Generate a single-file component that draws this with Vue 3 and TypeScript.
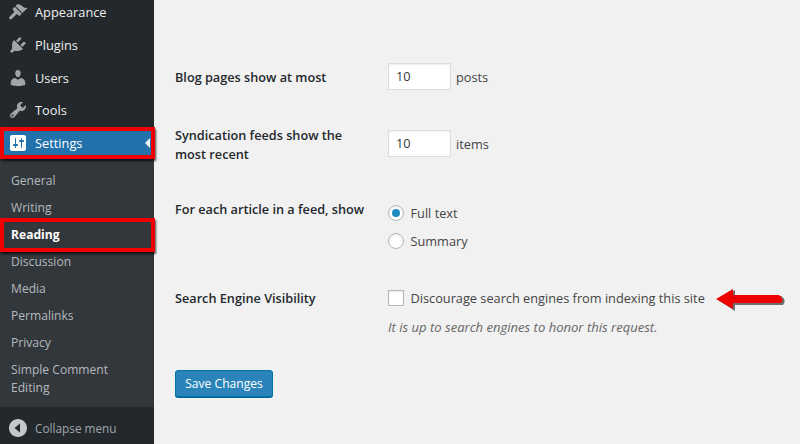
<script setup lang="ts">
const topItems = [
  { label: 'Appearance', d: 'M14.48 11.06L7.41 3.99l1.5-1.5c.5-.56 2.3-.47 3.51.32 1.21.8 1.43 1.28 2.91 2.1 1.18.64 2.45 1.26 4.45.85zm-.71.71L6.7 4.7 4.93 6.47c-.39.39-.39 1.02 0 1.41l1.06 1.06c.39.39.39 1.03 0 1.42l-4.4 4.4c-.6.6-.6 1.55 0 2.15s1.55.6 2.15 0l4.4-4.4c.39-.39 1.03-.39 1.42 0l1.06 1.06c.39.39 1.02.39 1.41 0z' },
  { label: 'Plugins', d: 'M13.11 4.36L9.87 7.6 8 5.73l3.24-3.24c.35-.34 1.05-.2 1.56.32.52.51.66 1.21.31 1.55zm-8 1.77l.91-1.12 9.01 9.01-1.19.84c-.71.71-2.63 1.16-3.82 1.16H6.14L4.9 17.26c-.59.59-1.54.59-2.12 0-.59-.58-.59-1.53 0-2.12l1.24-1.24v-3.88c0-1.13.4-3.19 1.09-3.89zm7.26 3.97l3.24-3.24c.34-.35 1.04-.21 1.55.31.52.51.66 1.21.31 1.55l-3.24 3.25z' },
  { label: 'Users', d: 'M10 9.25c-2.27 0-2.73-3.44-2.73-3.44C7 4.02 7.82 2 9.97 2c2.16 0 2.98 2.02 2.71 3.81 0 0-.41 3.44-2.68 3.44zm0 2.57L12.72 10c2.39 0 4.52 2.33 4.52 4.53v2.49s-3.65 1.13-7.24 1.13c-3.65 0-7.24-1.13-7.24-1.13v-2.49c0-2.25 1.94-4.48 4.47-4.48z' },
  { label: 'Tools', d: 'M16.68 9.77c-1.34 1.34-3.3 1.67-4.95.99l-5.41 6.52c-.99.99-2.59.99-3.58 0s-.99-2.59 0-3.57l6.52-5.42c-.68-1.65-.35-3.61.99-4.95 1.28-1.28 3.12-1.62 4.72-1.06l-2.89 2.89 2.82 2.82 2.86-2.87c.53 1.58.18 3.39-1.08 4.65zM3.81 16.21c.4.39 1.04.39 1.43 0 .4-.4.4-1.04 0-1.43-.39-.4-1.03-.4-1.43 0-.39.39-.39 1.03 0 1.43z' },
]
const settingsIcon = 'M18 16V4c0-1.1-.9-2-2-2H4c-1.1 0-2 .9-2 2v12c0 1.1.9 2 2 2h12c1.1 0 2-.9 2-2zM8 11h1c.55 0 1 .45 1 1s-.45 1-1 1H8v1.5c0 .28-.22.5-.5.5s-.5-.22-.5-.5V13H6c-.55 0-1-.45-1-1s.45-1 1-1h1V5.5c0-.28.22-.5.5-.5s.5.22.5.5V11zm5-2h-1c-.55 0-1-.45-1-1s.45-1 1-1h1V5.5c0-.28.22-.5.5-.5s.5.22.5.5V7h1c.55 0 1 .45 1 1s-.45 1-1 1h-1v5.5c0 .28-.22.5-.5.5s-.5-.22-.5-.5V9z'
const subItems = ['General', 'Writing', 'Reading', 'Discussion', 'Media', 'Permalinks', 'Privacy']
</script>

<template>
  <div class="page">
    <aside class="sidebar">
      <nav class="top">
        <div v-for="item in topItems" :key="item.label" class="menu-row">
          <svg class="icon" viewBox="0 0 20 20"><path :d="item.d" /></svg>
          <span>{{ item.label }}</span>
        </div>
        <div class="menu-row current">
          <svg class="icon" viewBox="0 0 20 20"><path :d="settingsIcon" /></svg>
          <span>Settings</span>
          <i class="notch"></i>
          <b class="red-box"></b>
        </div>
      </nav>
      <div class="submenu">
        <div v-for="s in subItems" :key="s" class="sub-row" :class="{ active: s === 'Reading' }">
          {{ s }}
          <b v-if="s === 'Reading'" class="red-box"></b>
        </div>
        <div class="sub-row multi">Simple Comment Editing</div>
      </div>
      <div class="collapse">
        <svg class="icon" viewBox="0 0 20 20"><path d="M10 19c-5 0-9-4-9-9s4-9 9-9 9 4 9 9-4 9-9 9zm2-13.500L6.500 10l5.500 4.500z" /></svg>
        <span>Collapse menu</span>
      </div>
    </aside>

    <main class="main">
      <div class="row r1">
        <div class="label">Blog pages show at most</div>
        <div class="field inline">
          <span class="input">10</span><span>posts</span>
        </div>
      </div>
      <div class="row r2">
        <div class="label two">Syndication feeds show the most recent</div>
        <div class="field inline">
          <span class="input">10</span><span>items</span>
        </div>
      </div>
      <div class="row r3">
        <div class="label">For each article in a feed, show</div>
        <div class="field">
          <div class="option"><i class="radio on"></i>Full text</div>
          <div class="option gap"><i class="radio"></i>Summary</div>
        </div>
      </div>
      <div class="row r4">
        <div class="label">Search Engine Visibility</div>
        <div class="field">
          <div class="option"><i class="check"></i>Discourage search engines from indexing this site</div>
          <div class="note">It is up to search engines to honor this request.</div>
        </div>
      </div>
      <button class="save" type="button">Save Changes</button>
      <svg class="arrow" viewBox="0 0 72 24" width="72" height="24">
        <path class="arrow-shadow" d="M2 12 L19 2 L19 8 L65 8 Q71 12 67 17 L19 17 L19 23 Z" />
        <path class="arrow-fill" d="M0 11 L17 1 L17 7 L63 7 Q69 11 65 15 L17 15 L17 21 Z" />
      </svg>
    </main>
  </div>
</template>

<style>
html, body { margin: 0; padding: 0; background: #f1f1f1; }
</style>

<style scoped>
.page {
  width: 800px;
  height: 444px;
  display: flex;
  overflow: hidden;
  font-family: "Open Sans", "Liberation Sans", sans-serif;
  font-size: 12.75px;
  color: #444;
  background: #f1f1f1;
}
.sidebar {
  width: 154px;
  flex: none;
  display: flex;
  flex-direction: column;
  background: #23282d;
  height: 444px;
}
.top { margin-top: -4px; }
.menu-row {
  position: relative;
  height: 32.700px;
  display: flex;
  align-items: center;
  color: #eee;
  font-size: 12.8px;
}
.icon {
  width: 20px;
  height: 20px;
  margin: 0 7px 0 8px;
  fill: #a0a5aa;
  flex: none;
}
.current { background: #2271ab; color: #fff; }
.current .icon { fill: #fff; }
.notch {
  position: absolute;
  right: 4px;
  top: 50%;
  margin-top: -5px;
  border: 5px solid transparent;
  border-right-color: #f1f1f1;
  border-left-width: 0;
}
.red-box {
  position: absolute;
  left: 0;
  top: 0;
  right: -1px;
  bottom: 0;
  border: 4px solid #f00000;
  box-shadow: 1px 2px 2px rgba(0, 0, 0, 0.7);
  pointer-events: none;
}
.submenu {
  background: #32373c;
  padding: 8px 0 0;
  flex: 1;
  color: #b4b9be;
  font-size: 12.1px;
}
.sub-row {
  position: relative;
  height: 27px;
  line-height: 27px;
  padding-left: 11px;
}
.sub-row.active { color: #fff; font-weight: 700; }
.sub-row.active .red-box { top: -3px; bottom: -4px; }
.sub-row.multi { height: auto; line-height: 18px; padding-top: 5px; width: 118px; }
.collapse {
  box-sizing: border-box;
  height: 37px;
  padding-top: 4px;
  display: flex;
  align-items: center;
  background: #23282d;
  color: #a0a5aa;
  flex: none;
  font-size: 11.8px;
}
.collapse .icon { fill: #c5c8cb; }
.main {
  position: relative;
  flex: 1;
  padding: 63px 0 0 21px;
}
.row { display: flex; align-items: flex-start; }
.label {
  width: 213px;
  flex: none;
  color: #23282d;
  font-weight: 600;
  line-height: 19px;
  font-size: 12.7px;
}
.label.two { width: 180px; margin-right: 33px; }
.field.inline { display: flex; align-items: center; gap: 5px; }
.r1 .label { margin-top: 5px; }
.r2 { margin-top: 40px; }
.r2 .label { margin-top: -4px; }
.r3 { margin-top: 40px; }
.r3 .label { margin-top: -4px; }
.r4 { margin-top: 39px; }
.input {
  box-sizing: border-box;
  width: 63px;
  height: 27px;
  line-height: 25px;
  border: 1px solid #ddd;
  background: #fff;
  padding-left: 7px;
  color: #32373c;
  box-shadow: inset 0 1px 2px rgba(0, 0, 0, 0.07);
}
.option { display: flex; align-items: center; gap: 6.500px; line-height: 18px; }
.option.gap { margin-top: 10px; }
.radio, .check {
  display: block;
  box-sizing: border-box;
  width: 16px;
  height: 16px;
  border: 1px solid #b4b9be;
  background: #fff;
  box-shadow: inset 0 1px 2px rgba(0, 0, 0, 0.1);
  flex: none;
}
.radio { border-radius: 50%; position: relative; }
.radio.on::after {
  content: "";
  position: absolute;
  left: 3px;
  top: 3px;
  width: 8px;
  height: 8px;
  border-radius: 50%;
  background: #1e8cbe;
}
.note { margin-top: 11px; font-style: italic; color: #666; line-height: 18px; font-size: 13.05px; }
.save {
  display: block;
  margin-top: 34px;
  width: 98px;
  height: 27px;
  padding: 0;
  font: inherit;
  font-size: 12.1px;
  color: #fff;
  background: #2a84b9;
  border: 1px solid #0073aa;
  border-radius: 3px;
  box-shadow: 0 1px 0 #006799;
}
.arrow { position: absolute; left: 562px; top: 288px; }
.arrow-fill { fill: #ee0000; }
.arrow-shadow { fill: rgba(0, 0, 0, 0.55); }
</style>
